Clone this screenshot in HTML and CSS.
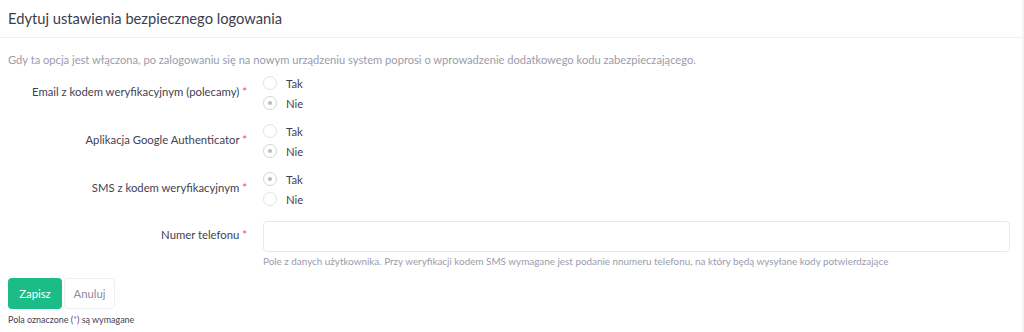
FILE: index.html
```html
<!DOCTYPE html>
<html lang="pl">
  <head>
    <meta charset="UTF-8" />
    <meta name="viewport" content="width=device-width, initial-scale=1.0" />
    <title>Edytuj ustawienia bezpiecznego logowania</title>
    <link rel="stylesheet" href="styles.css">
  </head>
  <body>
    <main class="card">
      <header class="card-header">
        <h1>Edytuj ustawienia bezpiecznego logowania</h1>
      </header>

      <form class="card-body">
        <p class="intro">
          Gdy ta opcja jest włączona, po zalogowaniu się na nowym urządzeniu system poprosi o wprowadzenie dodatkowego kodu zabezpieczającego.
        </p>

        <div class="form-row">
          <label class="form-label">Email z kodem weryfikacyjnym (polecamy) <span class="req">*</span></label>
          <div class="radios">
            <label class="radio"><input type="radio" name="email" /> Tak</label>
            <label class="radio"><input type="radio" name="email" checked /> Nie</label>
          </div>
        </div>

        <div class="form-row">
          <label class="form-label">Aplikacja Google Authenticator <span class="req">*</span></label>
          <div class="radios">
            <label class="radio"><input type="radio" name="google" /> Tak</label>
            <label class="radio"><input type="radio" name="google" checked /> Nie</label>
          </div>
        </div>

        <div class="form-row">
          <label class="form-label">SMS z kodem weryfikacyjnym <span class="req">*</span></label>
          <div class="radios">
            <label class="radio"><input type="radio" name="sms" checked /> Tak</label>
            <label class="radio"><input type="radio" name="sms" /> Nie</label>
          </div>
        </div>

        <div class="form-row phone-row">
          <label class="form-label" for="phone">Numer telefonu <span class="req">*</span></label>
          <div class="field">
            <input id="phone" type="text" class="text-input" />
            <p class="help">Pole z danych użytkownika. Przy weryfikacji kodem SMS wymagane jest podanie nnumeru telefonu, na który będą wysyłane kody potwierdzające</p>
          </div>
        </div>

        <div class="actions">
          <button type="submit" class="btn btn-primary">Zapisz</button>
          <button type="button" class="btn btn-light">Anuluj</button>
        </div>
        <p class="note">Pola oznaczone (<span class="req">*</span>) są wymagane</p>
      </form>
    </main>
  </body>
</html>
```

FILE: styles.css
```css
* {
  margin: 0;
  padding: 0;
  box-sizing: border-box;
}

body {
  font-family: "Lato", "Noto Sans", sans-serif;
  background-color: #f3f4f8;
  color: #3f4254;
  height: 332px;
  overflow: hidden;
}

.card {
  background-color: #fff;
  margin-right: 2px;
  min-height: 332px;
}

.card-header {
  height: 38px;
  display: flex;
  align-items: center;
  padding-inline: 8px;
  padding-bottom: 2px;
  border-bottom: 1px solid #eceef3;
}

.card-header h1 {
  font-size: 14.7px;
  font-weight: 400;
  color: #3b3d4e;
}

.card-body {
  padding: 14px 12px 0 8px;
}

.intro {
  font-size: 11.15px;
  line-height: 16px;
  color: #9a9cab;
  margin-bottom: 5px;
}

.form-row {
  display: flex;
  align-items: center;
  gap: 16px;
  margin-bottom: 8px;
}

.form-label {
  width: 239px;
  flex-shrink: 0;
  text-align: right;
  font-size: 11.3px;
  line-height: 14px;
  padding-bottom: 3px;
  color: #3f4254;
}

.req {
  color: #f1416c;
}

.radios {
  display: flex;
  flex-direction: column;
}

.radio {
  display: flex;
  align-items: center;
  gap: 9px;
  height: 20px;
  font-size: 11.3px;
  color: #3f4254;
}

.radio input {
  appearance: none;
  width: 14px;
  height: 14px;
  border: 1px solid #e2e4ea;
  border-radius: 50%;
  display: grid;
  place-content: center;
  background-color: #fff;
}

.radio input:checked {
  border-color: #d3d5de;
}

.radio input:checked::after {
  content: "";
  width: 4px;
  height: 4px;
  border-radius: 50%;
  background-color: #b5b7c6;
}

.phone-row {
  align-items: flex-start;
  margin-top: 12px;
  margin-bottom: 10px;
}

.phone-row .form-label {
  line-height: 28px;
}

.field {
  flex: 1;
}

.text-input {
  display: block;
  width: 100%;
  height: 31px;
  border: 1px solid #e6e8ee;
  border-radius: 4px;
  font: inherit;
  padding-inline: 8px;
}

.help {
  font-size: 9.9px;
  line-height: 14px;
  margin-top: 2px;
  color: #9a9cab;
}

.actions {
  display: flex;
  gap: 2px;
}

.btn {
  height: 31px;
  border-radius: 4px;
  font-family: inherit;
  font-size: 11.3px;
  cursor: pointer;
}

.btn-primary {
  width: 54px;
  background-color: #1bbc87;
  border: none;
  color: #fff;
}

.btn-light {
  width: 51px;
  background-color: #fff;
  border: 1px solid #eef0f6;
  color: #8b8d9c;
}

.note {
  font-size: 8.95px;
  line-height: 12px;
  margin-top: 5px;
  color: #3f4254;
}
```
